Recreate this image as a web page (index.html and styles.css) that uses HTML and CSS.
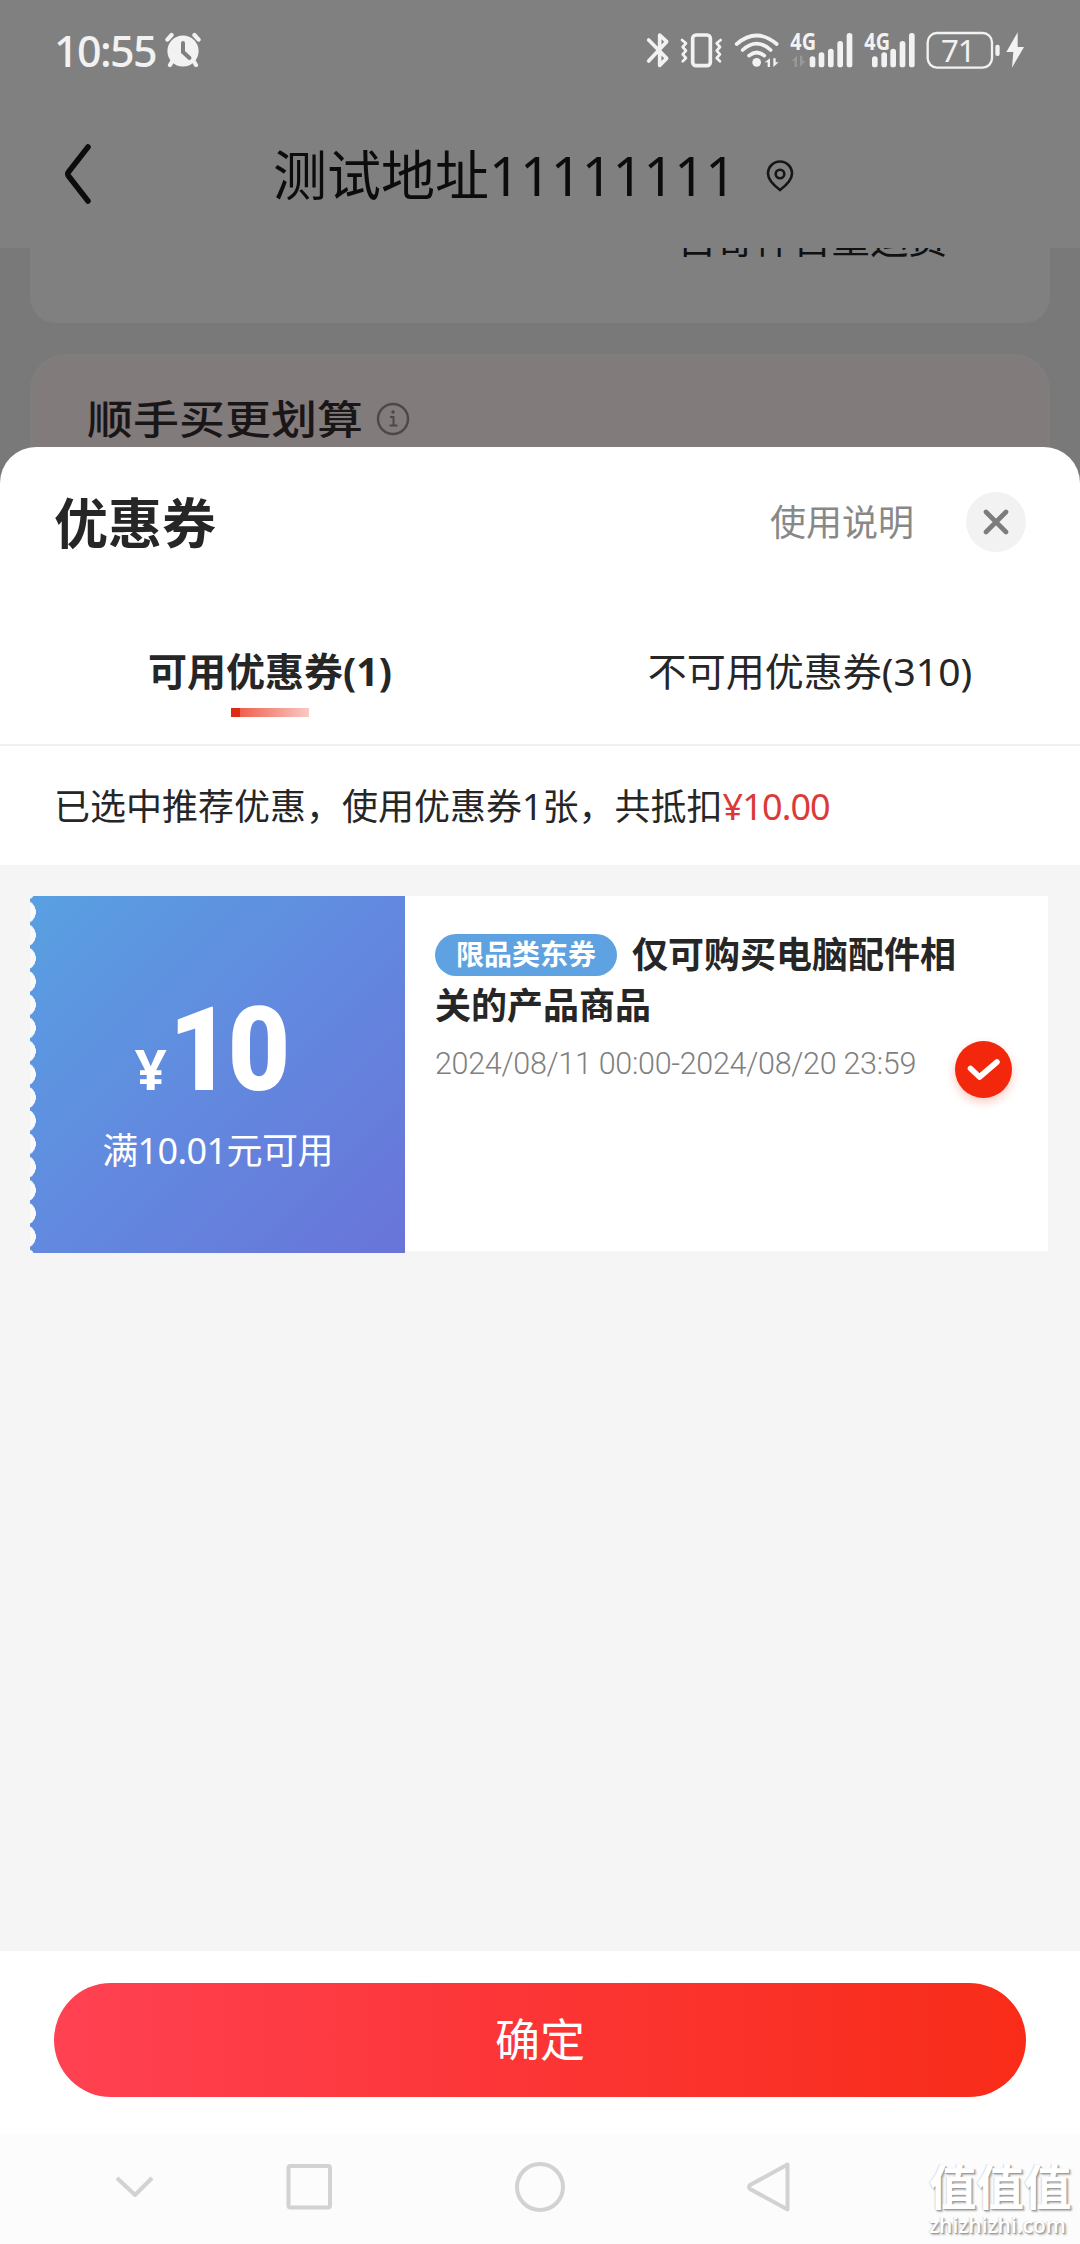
FILE: index.html
```html
<!DOCTYPE html>
<html lang="zh-CN">
<head>
<meta charset="utf-8">
<title>优惠券</title>
<link rel="stylesheet" href="styles.css">
</head>
<body>
<div class="screen">
  <div class="page">
    <div class="status">
      <div class="clock">
        <span class="time">10:55</span>
        <svg class="alarm" viewBox="0 0 36 36" width="36" height="36">
          <g stroke="#f2f2f2" stroke-width="4.2" stroke-linecap="round" fill="none">
            <path d="M2.4 7.6 6.600 3M33.600 7.600 29.400 3M8 28 5 33M28 28 31 33"/>
          </g>
          <circle cx="18" cy="19" r="15.600" fill="#f2f2f2"/>
          <path d="M18 11v9l6.500 6" stroke="#808080" stroke-width="4" fill="none" stroke-linecap="round"/>
        </svg>
      </div>
      <svg class="signals" viewBox="70 85 1170 135" width="390" height="45">
        <g fill="none" stroke="#f2f2f2" stroke-width="11" stroke-linecap="round" stroke-linejoin="round">
          <path d="M87 121 141 176 120 197 120 106 141 126 87 184"/>
          <path d="M187 121l12 10-10 11 10 11-10 11 10 11-10 10M303 121l-12 10 10 11-10 11 10 11-10 11 10 10" stroke-width="8"/>
          <rect x="219" y="106" width="53" height="92" rx="10"/>
          <path d="M351 133Q411 82 471 133M369 151Q411 113 453 151M388 168Q411 149 434 168"/>
        </g>
        <g fill="#f2f2f2">
          <circle cx="411" cy="188" r="13"/>
          <path d="M435 188l16-12v26h-7v-14zM477 188l-16 14v-26h7v12z"/>
          <rect x="570" y="170" width="17" height="33" rx="8"/>
          <rect x="597" y="158" width="17" height="45" rx="8"/>
          <rect x="625" y="147" width="17" height="56" rx="8"/>
          <rect x="653" y="124" width="17" height="79" rx="8"/>
          <rect x="681" y="100" width="17" height="103" rx="8"/>
          <rect x="757" y="170" width="17" height="33" rx="8"/>
          <rect x="785" y="158" width="17" height="45" rx="8"/>
          <rect x="812" y="147" width="17" height="56" rx="8"/>
          <rect x="840" y="124" width="17" height="79" rx="8"/>
          <rect x="868" y="100" width="17" height="103" rx="8"/>
          <rect x="1127" y="135" width="13" height="34" rx="6"/>
          <path d="M1194 98 1160 157h21l-4 47 36-62h-19z"/>
          <text class="net" x="512" y="151" textLength="77" lengthAdjust="spacingAndGlyphs">4G</text>
          <text class="net" x="734" y="151" textLength="77" lengthAdjust="spacingAndGlyphs">4G</text>
          <text class="battery" x="964" y="186" textLength="104">71</text>
        </g>
        <path d="M516 184l16-16v34h-7v-18zM557 184l-16 18v-34h7v16z" fill="#999"/>
        <rect x="924" y="100" width="193" height="104" rx="28" fill="none" stroke="#f2f2f2" stroke-width="7"/>
      </svg>
    </div>
    <div class="address">
      <svg class="back" viewBox="0 0 28 62" width="28" height="62"><path d="M24 4 4.500 29Q3 31 4.500 33L24 58" fill="none" stroke="#0c0c0c" stroke-width="5.500" stroke-linecap="round"/></svg>
      <h1>测试地址11111111</h1>
      <svg class="pin" viewBox="0 0 28 32" width="28" height="32"><g fill="none" stroke="#161616" stroke-width="2.600"><path d="M14 30C10 27 2 21 2 13.500a12 12 0 0 1 24 0C26 21 18 27 14 30z"/><circle cx="14" cy="14" r="4.300"/></g></svg>
    </div>
    <div class="freight"><span>自寄件首重运费</span></div>
    <div class="addon">
      <h2>顺手买更划算</h2>
      <svg viewBox="0 0 34 34" width="34" height="34"><circle cx="17" cy="17" r="15" fill="none" stroke="#4c4849" stroke-width="2.400"/><path d="M14 15h3.500v8M13.500 23.500h8" fill="none" stroke="#4c4849" stroke-width="2"/><circle cx="17" cy="10" r="1.700" fill="#4c4849"/></svg>
    </div>
  </div>

  <div class="sheet">
    <div class="sheet-head">
      <h2>优惠券</h2>
      <span class="help">使用说明</span>
      <span class="close"><svg viewBox="0 0 26 26" width="26" height="26"><path d="M3 3 23 23M23 3 3 23" stroke="#7c7c7c" stroke-width="4.600" stroke-linecap="round"/></svg></span>
    </div>
    <div class="tabs">
      <div class="tab active">可用优惠券(1)<i></i></div>
      <div class="tab">不可用优惠券(310)</div>
    </div>
    <p class="notice">已选中推荐优惠，使用优惠券1张，共抵扣<span>¥10.00</span></p>
    <div class="list">
      <div class="coupon">
        <div class="value">
          <div class="amount"><small>¥</small><b>10</b></div>
          <div class="rule">满10.01元可用</div>
        </div>
        <div class="info">
          <div class="desc">
            <h3><span class="tag">限品类东券</span>仅可购买电脑配件相关的产品商品</h3>
            <p>2024/08/11 00:00-2024/08/20 23:59</p>
          </div>
          <span class="check"><svg viewBox="0 0 34 24" width="34" height="24"><path d="M3.500 10.500 12.500 19 30 4" fill="none" stroke="#fff" stroke-width="5.600" stroke-linecap="round" stroke-linejoin="round"/></svg></span>
        </div>
      </div>
    </div>
    <div class="footer"><div class="confirm">确定</div></div>
    <div class="nav">
      <svg viewBox="0 0 1080 110" width="1080" height="110">
        <g fill="none" stroke="#d2d2d2" stroke-width="4" stroke-linejoin="round">
          <path d="M117 44 135 61 152 44"/>
          <rect x="288.500" y="32" width="41.500" height="41.500" rx="2"/>
          <circle cx="540" cy="53" r="23"/>
          <path d="M787.500 30.500V75.500L750 55Q748 53 750 51z"/>
        </g>
      </svg>
      <div class="mark"><b>值值值</b><span>zhizhizhi.com</span></div>
    </div>
  </div>
</div>
</body>
</html>
```

FILE: styles.css
```css
* { box-sizing: border-box; }
body, h1, h2, h3, p { margin: 0; }
svg { display: block; flex: none; }
body {
  background: #797979;
  font-family: "Noto Sans", "Noto Sans CJK SC", sans-serif;
  color: #262626;
}
.screen { width: 1080px; height: 2244px; overflow: hidden; display: flex; flex-direction: column; }

/* Dimmed page behind the sheet */
.page { height: 483px; flex: none; }
.status {
  height: 100px; padding: 0 41px 0 54px; background: #808080;
  display: flex; justify-content: space-between; align-items: center;
}
.clock { display: flex; align-items: center; gap: 8px; }
.time { font-weight: 500; font-size: 43px; line-height: 60px; color: #f2f2f2; letter-spacing: -1.6px; width: 103px; margin-top: 2px; white-space: nowrap; }
.signals { margin-right: 6px; }
.net { font: 700 68px "Noto Sans", sans-serif; }
.battery { font: 400 94px "Noto Sans", sans-serif; }
.address { height: 148px; background: #808080; color: #0c0c0c; display: flex; align-items: center; padding: 0 0 0 64px; }
.address h1 { font-size: 54px; font-weight: 400; line-height: 80px; width: 464px; margin: 2px 0 0 181px; white-space: nowrap; }
.pin { margin: 3px 0 0 29px; }
.freight {
  height: 75px; margin: 0 30px; background: #808080; border-radius: 0 0 26px 26px;
  overflow: hidden; text-align: right; padding-right: 103px;
}
.freight span { display: block; font-size: 38.500px; line-height: 58px; margin-top: -39px; color: #111; }
.addon {
  height: 129px; margin: 31px 30px 0; padding: 35px 0 0 54px; border-radius: 36px 36px 0 0;
  border: 3px solid #7e7e7e; border-bottom: 0; background: #827b7c;
  display: flex; align-items: flex-start; gap: 13px;
}
.addon h2 { font-size: 46px; font-weight: 500; line-height: 54px; color: #1a1617; transform: scaleY(.86); }
.addon svg { margin-top: 10px; }

/* Coupon sheet */
.sheet { position: relative; flex: 1; margin-top: -36px; background: #fff; border-radius: 36px 36px 0 0; display: flex; flex-direction: column; }
.sheet-head { height: 150px; padding: 0 54px; display: flex; align-items: center; }
.sheet-head h2 { font-size: 54px; line-height: 76px; font-weight: 700; flex: 1; margin-top: 2px; }
.help { font-size: 36px; line-height: 50px; color: #888; margin: 1px 52px 0 0; }
.close { width: 60px; height: 60px; border-radius: 50%; background: #f2f2f2; display: grid; place-items: center; }
.tabs { height: 149px; display: flex; border-bottom: 2px solid #f0f0f0; }
.tab { flex: 1; display: flex; flex-direction: column; align-items: center; padding-top: 45px; font-size: 39px; line-height: 58px; }
.tab.active { font-weight: 700; }
.tab i { width: 78px; height: 9px; margin-top: 8px; background: linear-gradient(90deg, #dd2a14 0 9px, #f0604e 9px, #f9c9c4); }
.notice { height: 119px; padding-left: 54px; font-size: 36px; line-height: 121px; white-space: nowrap; }
.notice span { color: #dc3a38; letter-spacing: -.9px; }
.list { flex: 1; background: #f5f5f5; padding: 31px 32px 0 30px; }
.coupon { height: 357px; display: flex; }
.value {
  width: 375px; flex: none; color: #fff; display: flex; flex-direction: column; align-items: center; padding-top: 94px;
  background: radial-gradient(circle 12.200px at -6.200px 50%, #f9f9f9 97%, transparent 100%) 0 4.400px / 24px 23.200px repeat-y,
    linear-gradient(135deg, #58a0e1, #6289df 50%, #6974d9);
}
.amount { height: 120px; display: flex; align-items: baseline; margin-right: 4px; font-family: "Roboto", sans-serif; font-weight: 700; line-height: 120px; }
.amount small { font-family: "Noto Sans", sans-serif; font-size: 56px; line-height: 60px; }
.amount b { font-size: 117px; letter-spacing: -4px; margin-left: 2px; transform: scaleX(.92); transform-origin: left; }
.rule { font-size: 36px; line-height: 54px; margin-top: 14px; letter-spacing: -.6px; }
.info { flex: 1; height: 355px; background: #fff; padding: 33px 36px 0 30px; display: flex; }
.desc { width: 524px; flex: none; }
.desc h3 { font-size: 36px; line-height: 51px; font-weight: 700; }
.tag {
  display: inline-block; height: 42px; width: 182px; margin-right: 15px; border-radius: 21px; background: #5ea2e1;
  color: #fff; font-size: 28px; line-height: 40px; text-align: center; vertical-align: 3px;
}
.desc p { font: 300 30.500px/40px "Roboto", sans-serif; color: #808080; letter-spacing: -.3px; margin-top: 13px; white-space: nowrap; }
.check {
  width: 57px; height: 57px; margin: 112px 0 0 -4px; border-radius: 50%; background: #f2270c; flex: none;
  display: grid; place-items: center; box-shadow: 0 4px 10px rgba(242, 39, 12, .25);
}
.footer { height: 183px; background: #fff; padding: 32px 54px 0; }
.confirm {
  height: 114px; border-radius: 57px; background: linear-gradient(90deg, #ff4152, #fc3638 45%, #f82c18);
  color: #fff; font-size: 45px; line-height: 114px; text-align: center;
}

/* System navigation */
.nav { position: relative; height: 110px; background: #fcfcfc; }
.mark {
  position: absolute; left: 929px; top: 28px; color: #fff; display: flex; flex-direction: column;
  text-shadow: 1px 1px 1px #999, 2px 2px 2px #bbb, -1px 0 1px #ddd;
}
.mark b { font-size: 47.500px; line-height: 50px; font-weight: 700; }
.mark span { font: 600 21px/24px "Open Sans", sans-serif; margin-top: 1px; white-space: nowrap; }
```
